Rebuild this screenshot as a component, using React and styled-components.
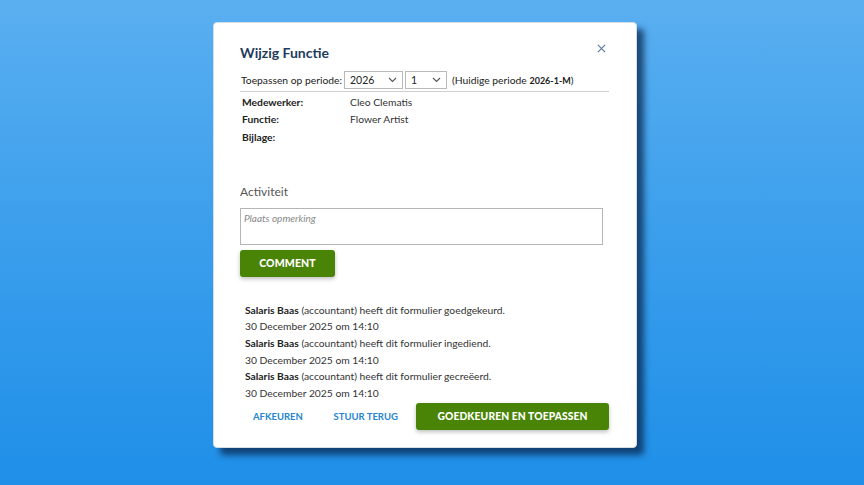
import React from 'react'
import styled, { createGlobalStyle } from 'styled-components'

const GlobalStyle = createGlobalStyle`
  html, body {
    margin: 0;
    padding: 0;
  }
  body {
    font-family: Lato, "Liberation Sans", sans-serif;
    color: #333;
  }
`

const activities = [
  { who: 'Salaris Baas', role: '(accountant)', action: 'heeft dit formulier goedgekeurd.', when: '30 December 2025 om 14:10' },
  { who: 'Salaris Baas', role: '(accountant)', action: 'heeft dit formulier ingediend.', when: '30 December 2025 om 14:10' },
  { who: 'Salaris Baas', role: '(accountant)', action: 'heeft dit formulier gecreëerd.', when: '30 December 2025 om 14:10' },
]

const Chevron = () => (
  <svg width="9" height="6" viewBox="0 0 9 6" fill="none">
    <path d="M1 1l3.5 3.5L8 1" stroke="#555" strokeWidth="1.1" />
  </svg>
)

const App = () => {
  return (
    <Page>
      <GlobalStyle />
      <Modal>
        <Header>
          <Title>Wijzig Functie</Title>
          <Close>
            <svg width="9" height="9" viewBox="0 0 10 10">
              <path d="M1 1l8 8M9 1l-8 8" stroke="#5b7fa6" strokeWidth="1.4" />
            </svg>
          </Close>
        </Header>

        <PeriodRow>
          <span>Toepassen op periode:</span>
          <Select width={59}>2026<Chevron /></Select>
          <Select width={42}>1<Chevron /></Select>
          <span>(Huidige periode <Code>2026-1-M</Code>)</span>
        </PeriodRow>

        <Details>
          <Label>Medewerker:</Label><Value>Cleo Clematis</Value>
          <Label>Functie:</Label><Value>Flower Artist</Value>
          <Label>Bijlage:</Label><Value />
        </Details>

        <SectionTitle>Activiteit</SectionTitle>
        <Comment placeholder="Plaats opmerking" />
        <PrimaryButton>COMMENT</PrimaryButton>

        <Log>
          {activities.map((a, i) => (
            <Entry key={i}>
              <div><strong>{a.who}</strong> {a.role} {a.action}</div>
              <div>{a.when}</div>
            </Entry>
          ))}
        </Log>

        <Footer>
          <TextButton width={94} pad={13}>AFKEUREN</TextButton>
          <TextButton width={83} pad={0}>STUUR TERUG</TextButton>
          <PrimaryButton wide>GOEDKEUREN EN TOEPASSEN</PrimaryButton>
        </Footer>
      </Modal>
    </Page>
  )
}

export default App

const Page = styled.div`
width: 864px;
height: 485px;
background: linear-gradient(180deg, #5aaff0 0%, #3a9eec 50%, #1f8fe8 100%);
display: flex;
justify-content: center;
align-items: flex-start;
padding-top: 22px;
box-sizing: border-box;
overflow: hidden;
`

const Modal = styled.div`
width: 424px;
height: 426px;
margin-right: 14px;
box-sizing: border-box;
background: #fff;
border-radius: 4px;
border: 1px solid #d6dde4;
box-shadow: 7px 7px 6px rgba(10, 40, 80, 0.75);
padding: 16px 27px 0 26px;
display: flex;
flex-direction: column;
`

const Header = styled.div`
display: flex;
justify-content: space-between;
align-items: flex-start;
height: 31px;
`

const Title = styled.h2`
margin: 0;
margin-top: 5px;
font-size: 14px;
font-weight: 700;
color: #1f3b5c;
`

const Close = styled.div`
display: flex;
margin-top: 5px;
margin-right: 3px;
`

const PeriodRow = styled.div`
display: flex;
align-items: center;
gap: 2px;
font-size: 10.3px;
color: #222;
padding-bottom: 2px;
border-bottom: 1px solid #d0d0d0;
height: 19px;
span:first-child { margin-left: 1px; }
span:last-child { margin-left: 3px; }
`

const Select = styled.div`
width: ${p => p.width}px;
height: 18px;
box-sizing: border-box;
border: 1px solid #b9b9b9;
padding: 0 5px;
display: flex;
align-items: center;
justify-content: space-between;
font-size: 10.5px;
`

const Code = styled.b`
font-size: 9px;
`

const Details = styled.div`
display: grid;
grid-template-columns: 108px 1fr;
grid-auto-rows: 17.5px;
padding: 1px 2px 0;
font-size: 10.3px;
align-items: center;
`

const Label = styled.div`
font-weight: 700;
color: #222;
`

const Value = styled.div`
color: #333;
`

const SectionTitle = styled.div`
margin-top: 38px;
font-size: 12px;
color: #555;
`

const Comment = styled.textarea`
margin-top: 9px;
width: 363px;
height: 37px;
box-sizing: border-box;
border: 1px solid #b5b5b5;
resize: none;
padding: 3px;
font-family: inherit;
font-size: 10px;
&::placeholder { font-style: italic; color: #888; }
`

const PrimaryButton = styled.button`
margin-top: ${p => (p.wide ? '0' : '5px')};
width: ${p => (p.wide ? '194px' : '95px')};
height: 27px;
border: none;
border-radius: 3px;
background: #4a8407;
color: #fff;
font-family: inherit;
font-weight: 900;
font-size: ${p => (p.wide ? '10.3px' : '10.5px')};
letter-spacing: 0.1px;
white-space: nowrap;
box-shadow: 0 2px 4px rgba(0, 0, 0, 0.25);
cursor: pointer;
`

const Log = styled.div`
margin-top: 25px;
padding-left: 5px;
font-size: 10.3px;
color: #333;
display: flex;
flex-direction: column;
strong { color: #222; }
`

const Entry = styled.div`
line-height: 16.7px;
`

const Footer = styled.div`
margin-top: 1px;
display: flex;
align-items: center;
`

const TextButton = styled.button`
background: none;
border: none;
color: #2685cf;
font-family: inherit;
font-weight: 700;
font-size: 9.5px;
white-space: nowrap;
text-align: left;
width: ${p => p.width}px;
padding: 0 0 0 ${p => p.pad}px;
`
